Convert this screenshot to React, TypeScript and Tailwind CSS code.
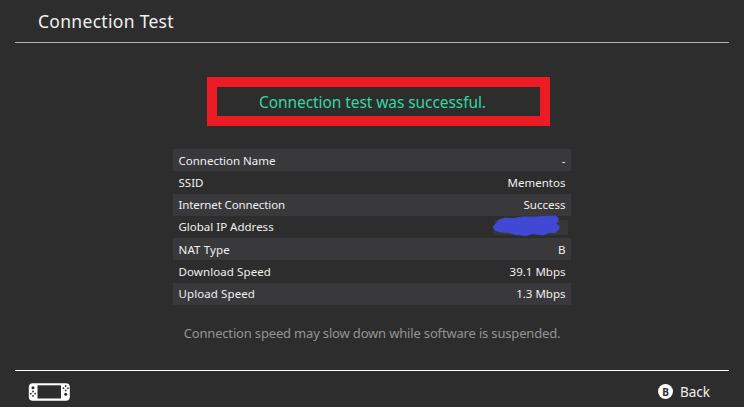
const rows = [
  { label: "Connection Name", value: "-", tracking: "" },
  { label: "SSID", value: "Mementos", tracking: "" },
  { label: "Internet Connection", value: "Success", tracking: "tracking-[-0.12px]" },
  { label: "Global IP Address", value: null, tracking: "" },
  { label: "NAT Type", value: "B", tracking: "tracking-[0.15px]" },
  { label: "Download Speed", value: "39.1 Mbps", tracking: "tracking-[0.1px]" },
  { label: "Upload Speed", value: "1.3 Mbps", tracking: "tracking-[0.1px]" },
];

function Redaction() {
  return (
    <span className="relative block h-[15px] w-[74px] bg-[#363739]">
      <svg className="absolute -left-[3px] -top-[6px] h-6 w-[76px]" viewBox="0 0 76 24" fill="#4148d3">
        <path d="M2 13 L5 10 L8 6 L14 4 L23 4.5 L31 3 L43 3 L54 2.5 L64 2 L67 3.5 L67 8 L64 9.5 L68 12 L68 15 L64 18.5 L58 18.5 L52 21 L42 19.5 L35 21.5 L25 20.5 L18 18.5 L10 18 L4 16Z" stroke="#4148d3" strokeLinejoin="round" />
      </svg>
    </span>
  );
}

function ConsoleIcon() {
  return (
    <svg className="h-[18px] w-[42px]" viewBox="0 0 42 18">
      <rect x="0.8" y="0.3" width="41" height="17.4" rx="4" fill="#fff" />
      <rect x="9.5" y="2.3" width="23.5" height="13.2" fill="#2d2d2d" />
      <circle cx="5" cy="4.7" r="1.5" fill="#2d2d2d" />
      <circle cx="37.7" cy="11.3" r="1.5" fill="#2d2d2d" />
      <g fill="#2d2d2d">
        <circle cx="5" cy="8.5" r="0.9" />
        <circle cx="5" cy="12.9" r="0.9" />
        <circle cx="2.8" cy="10.7" r="0.9" />
        <circle cx="7.2" cy="10.7" r="0.9" />
        <circle cx="37.7" cy="3" r="0.9" />
        <circle cx="37.7" cy="7.4" r="0.9" />
        <circle cx="35.5" cy="5.2" r="0.9" />
        <circle cx="39.9" cy="5.2" r="0.9" />
      </g>
    </svg>
  );
}

export default function App() {
  return (
    <main className="flex h-[407px] w-[744px] flex-col overflow-hidden bg-[#2d2d2d] px-[15px] font-['Noto_Sans',sans-serif] text-[#f0f0f0]">
      <header className="flex h-[43px] shrink-0 items-center border-b border-[#b4b4b4] pb-px pl-[23px]">
        <h1 className="whitespace-nowrap text-[17.5px] leading-6 tracking-[0.3px]">Connection Test</h1>
      </header>
      <section className="flex flex-1 flex-col items-center pt-[34px]">
        <div className="ml-[13px] flex h-[49px] w-[343px] items-center justify-center border-10 border-[#ed1c24] pr-3 pt-px">
          <p className="whitespace-nowrap text-[15.5px] leading-6 tracking-[-0.08px] text-[#35d6a0]">Connection test was successful.</p>
        </div>
        <dl className="mt-[23px] w-[398px] text-[11.5px]">
          {rows.map((row) => (
            <div key={row.label} className="flex h-[22.3px] items-center justify-between px-[5.5px] odd:bg-[#39393b]">
              <dt className={`whitespace-nowrap ${row.tracking}`}>{row.label}</dt>
              <dd className={row.value === null ? "-mr-0.5" : "whitespace-nowrap"}>{row.value ?? <Redaction />}</dd>
            </div>
          ))}
        </dl>
        <p className="mt-[18px] whitespace-nowrap text-[13px] leading-5 tracking-[-0.17px] text-[#949494]">
          Connection speed may slow down while software is suspended.
        </p>
      </section>
      <footer className="flex h-[37px] shrink-0 items-center justify-between border-t border-white pl-[13px] pr-[19px] pt-[5px]">
        <ConsoleIcon />
        <div className="flex items-center gap-[7px]">
          <span className="flex size-[15px] items-center justify-center rounded-full bg-white text-[10px] font-bold leading-none text-[#2d2d2d]">B</span>
          <span className="text-[13.5px] leading-5">Back</span>
        </div>
      </footer>
    </main>
  );
}
